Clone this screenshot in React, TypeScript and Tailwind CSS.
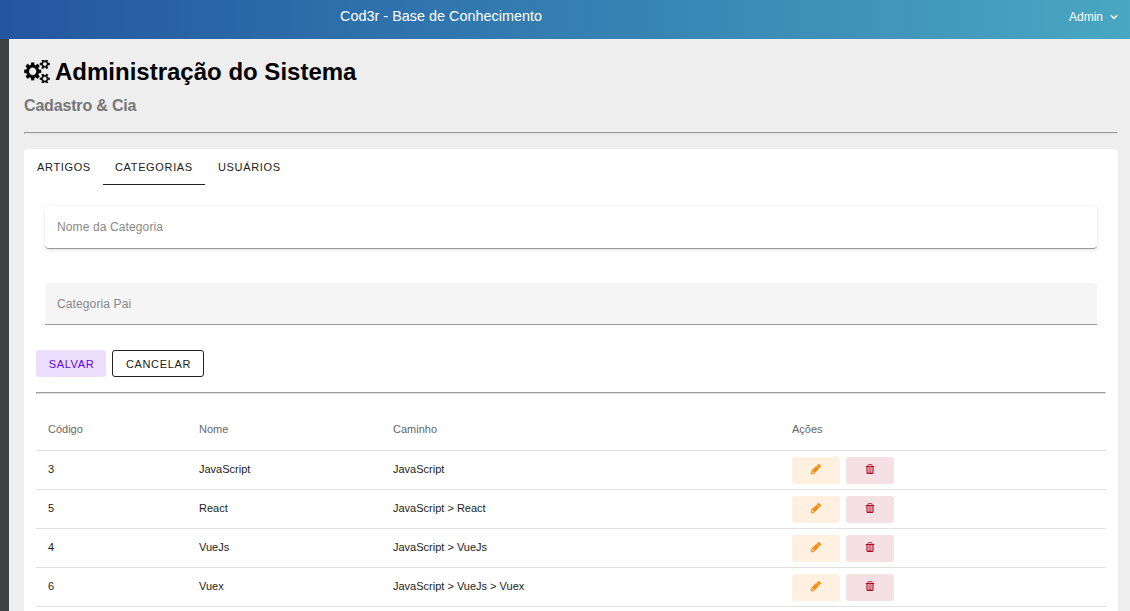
const COGS =
  'M896 768q0-106-75-181t-181-75-181 75-75 181 75 181 181 75 181-75 75-181zm768 512q0-52-38-90t-90-38-90 38-38 90q0 53 37.5 90.5t90.5 37.5 90.5-37.5 37.5-90.5zm0-1024q0-52-38-90t-90-38-90 38-38 90q0 53 37.5 90.5t90.5 37.5 90.5-37.5 37.5-90.5zm-384 421v185q0 10-7 19.5t-16 10.5l-155 24q-11 35-32 76 34 48 90 115 7 11 7 20 0 12-7 19-23 30-82.5 89.5t-78.5 59.5q-11 0-21-7l-115-90q-37 19-77 31-11 108-23 155-7 24-30 24h-186q-11 0-20-7.5t-10-17.5l-23-153q-34-10-75-31l-118 89q-7 7-20 7-11 0-21-8-144-133-144-160 0-9 7-19 10-14 41-53t47-61q-23-44-35-82l-152-24q-10-1-17-9.5t-7-19.5v-185q0-10 7-19.5t16-10.5l155-24q11-35 32-76-34-48-90-115-7-11-7-20 0-12 7-20 22-30 82-89t79-59q11 0 21 7l115 90q34-18 77-32 11-108 23-154 7-24 30-24h186q11 0 20 7.5t10 17.5l23 153q34 10 75 31l118-89q8-7 20-7 11 0 21 8 144 133 144 160 0 8-7 19-12 16-42 54t-45 60q23 48 34 82l152 23q10 2 17 10.5t7 19.5zm640 533v140q0 16-149 31-12 27-30 52 51 113 51 138 0 4-4 7-122 71-124 71-8 0-46-47t-52-68q-20 2-30 2t-30-2q-14 21-52 68t-46 47q-2 0-124-71-4-3-4-7 0-25 51-138-18-25-30-52-149-15-149-31v-140q0-16 149-31 13-29 30-52-51-113-51-138 0-4 4-7 4-2 35-20t59-34 30-16q8 0 46 46.5t52 67.5q20-2 30-2t30 2q51-71 92-112l6-2q4 0 124 70 4 3 4 7 0 25-51 138 17 23 30 52 149 15 149 31zm0-1024v140q0 16-149 31-12 27-30 52 51 113 51 138 0 4-4 7-122 71-124 71-8 0-46-47t-52-68q-20 2-30 2t-30-2q-14 21-52 68t-46 47q-2 0-124-71-4-3-4-7 0-25 51-138-18-25-30-52-149-15-149-31v-140q0-16 149-31 13-29 30-52-51-113-51-138 0-4 4-7 4-2 35-20t59-34 30-16q8 0 46 46.5t52 67.5q20-2 30-2t30 2q51-71 92-112l6-2q4 0 124 70 4 3 4 7 0 25-51 138 17 23 30 52 149 15 149 31z';
const PENCIL =
  'M491 1536l91-91-235-235-91 91v107h128v128h107zm469-1120l416 416-832 832h-416v-416zm683 96q0 53-37 90l-166 166-416-416 166-165q36-38 90-38 53 0 91 38l235 234q37 39 37 91z';

const categories = [
  { id: 3, name: 'JavaScript', path: 'JavaScript' },
  { id: 5, name: 'React', path: 'JavaScript > React' },
  { id: 4, name: 'VueJs', path: 'JavaScript > VueJs' },
  { id: 6, name: 'Vuex', path: 'JavaScript > VueJs > Vuex' },
];

function TrashIcon() {
  return (
    <svg className="h-[10px] w-[10px]" viewBox="0 0 10 10" fill="none" stroke="currentColor">
      <path d="M3 2V1.2Q3 0.6 3.6 0.6H6.4Q7 0.6 7 1.2V2" strokeWidth="0.8" />
      <path d="M0.8 2.5H9.2" />
      <path d="M2 2.5V8.6Q2 9.4 2.6 9.4H7.4Q8 9.4 8 8.6V2.5" strokeWidth="1.1" />
      <path d="M4.1 3V9M5.9 3V9" strokeWidth="0.8" />
    </svg>
  );
}

function Header() {
  return (
    <header className="flex h-[39px] shrink-0 items-start bg-linear-to-r from-[#2456a0] to-[#49a7c1] text-white">
      <h1 className="ml-[340px] mt-[5px] text-[14.4px] leading-[22px] tracking-[0.02px]">Cod3r - Base de Conhecimento</h1>
      <button className="ml-auto mr-3 mt-[6px] flex items-center text-[12px] leading-[22px]">
        Admin
        <svg className="ml-[7px] h-[6px] w-[8px]" viewBox="0 0 8 6" fill="none" stroke="currentColor" strokeWidth="1.4">
          <path d="M0.8 1.2L4 4.4L7.2 1.2" />
        </svg>
      </button>
    </header>
  );
}

function Rule() {
  return <hr className="h-[2px] border border-t-[#9a9a9a] border-r-[#eeeeee] border-b-[#e3e3e3] border-l-[#9a9a9a]" />;
}

function Tabs() {
  return (
    <nav className="flex h-9 text-[11px] leading-9 tracking-[0.65px] text-[#212121]">
      <button className="w-[79px] pl-[13px] text-left">ARTIGOS</button>
      <button className="w-[102px] border-b border-[#212121] pl-3 text-left">CATEGORIAS</button>
      <button className="w-[88px] pl-[13px] text-left">USUÁRIOS</button>
    </nav>
  );
}

function CategoryTable() {
  return (
    <table className="mt-[14px] w-full table-fixed border-collapse text-left text-[11px] text-[#1c1c1c]">
      <colgroup>
        <col className="w-[151px]" />
        <col className="w-[194px]" />
        <col className="w-[399px]" />
        <col />
      </colgroup>
      <thead>
        <tr className="h-[42px] border-b border-[#e0e0e0] text-[#666]">
          <th className="pl-3 font-normal">Código</th>
          <th className="pl-3 font-normal">Nome</th>
          <th className="pl-3 font-normal">Caminho</th>
          <th className="pl-3 font-normal">Ações</th>
        </tr>
      </thead>
      <tbody>
        {categories.map((c) => (
          <tr key={c.id} className="h-[39px] border-b border-[#e0e0e0]">
            <td className="pl-3">{c.id}</td>
            <td className="pl-3">{c.name}</td>
            <td className="pl-3">{c.path}</td>
            <td className="pt-[2px] pl-3">
              <div className="flex gap-[6px]">
                <button className="flex h-[27px] w-12 items-start justify-center rounded-[3px] bg-[#fff0e0] pt-[6px] text-[#fb8c13]">
                  <svg className="h-3 w-3" viewBox="0 0 1792 1792" fill="currentColor">
                    <path d={PENCIL} />
                  </svg>
                </button>
                <button className="flex h-[27px] w-12 items-start justify-center rounded-[3px] bg-[#f5e0e3] pt-[7px] text-[#b00020]">
                  <TrashIcon />
                </button>
              </div>
            </td>
          </tr>
        ))}
      </tbody>
    </table>
  );
}

export default function App() {
  return (
    <div className="flex h-[611px] flex-col overflow-hidden font-['Liberation_Sans',Arial,sans-serif]">
      <Header />
      <div className="flex min-h-0 flex-1">
        <aside className="w-[9px] shrink-0 bg-[#404142]" />
        <main className="flex flex-1 flex-col bg-[#eeeeee] pr-3 pl-[15px]">
          <h2 className="mt-[19px] flex h-7 items-center text-[24px] leading-7 font-bold text-black">
            <svg className="mr-[5px] mb-px h-[23px] w-[26px]" viewBox="0 -20 1920 1600" preserveAspectRatio="none" fill="currentColor" stroke="#eeeeee" strokeWidth="25">
              <path d={COGS} />
            </svg>
            Administração do Sistema
          </h2>
          <h3 className="mt-[10px] text-[16px] leading-5 font-bold tracking-[-0.17px] text-[#777]">Cadastro &amp; Cia</h3>
          <div className="mt-[16px]">
            <Rule />
          </div>
          <section className="mt-[15px] min-h-0 flex-1 rounded-t bg-white">
            <Tabs />
            <div className="px-3 pt-[21px]">
              <div className="px-[9px] text-[12px] tracking-[0.12px] text-[#888]">
                <div className="flex h-[43px] items-center rounded-[4px] border-b border-[#999] pl-3 shadow-[0_1px_4px_rgba(0,0,0,0.12)]">
                  Nome da Categoria
                </div>
                <div className="mt-[34px] flex h-[42px] items-center rounded-t-[4px] border-b border-[#999] bg-[#f5f5f5] pl-3">
                  Categoria Pai
                </div>
              </div>
              <div className="mt-[25px] flex gap-[6px] text-[11px] tracking-[0.65px]">
                <button className="h-[27px] w-[70px] rounded-[3px] bg-[#ecdffd] pt-px pl-px text-[#6200ee]">SALVAR</button>
                <button className="h-[27px] w-[92px] rounded-[3px] border border-[#212121] pt-px pl-px text-[#212121]">CANCELAR</button>
              </div>
              <div className="mt-[15px]">
                <Rule />
              </div>
              <CategoryTable />
            </div>
          </section>
        </main>
      </div>
    </div>
  );
}
